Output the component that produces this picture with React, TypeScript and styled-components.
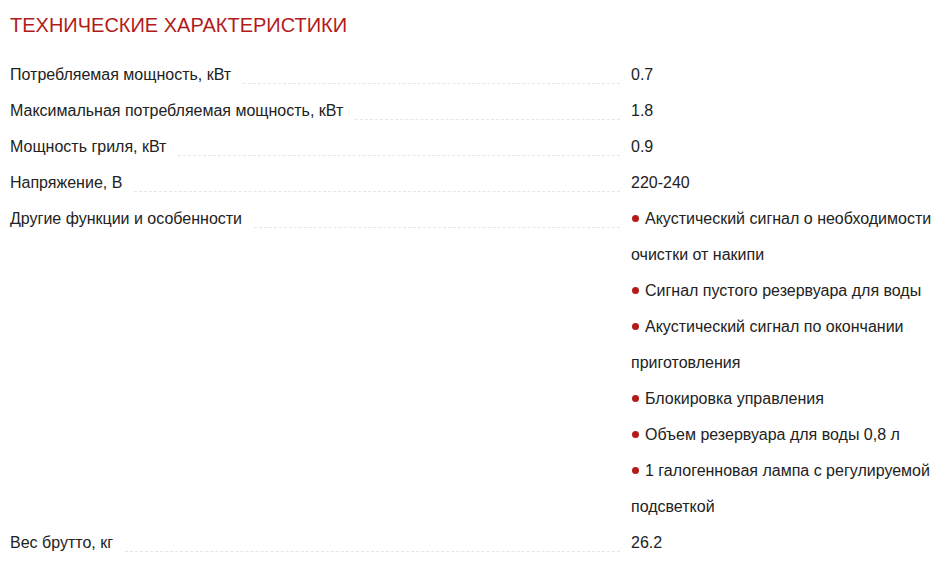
import React from "react";
import styled, { createGlobalStyle } from "styled-components";

const Global = createGlobalStyle`
  html, body { margin: 0; padding: 0; background: #fff; }
  body { font-family: "Liberation Sans", Arial, sans-serif; color: #222; }
`;

const Page = styled.div`
  padding: 10px 10px 0 10px;
  width: 945px;
  box-sizing: border-box;
`;

const Title = styled.h2`
  margin: 0 0 17px 0;
  font-size: 20px;
  line-height: 30px;
  font-weight: 400;
  color: #b31b1b;
  text-transform: uppercase;
`;

const Table = styled.div`
  display: grid;
  grid-template-columns: 610px 1fr;
  column-gap: 11px;
  font-size: 16px;
  line-height: 36px;
`;

const LabelCell = styled.div`
  display: flex;
  align-items: flex-start;
`;

const LabelText = styled.span`
  white-space: nowrap;
`;

const Leader = styled.span`
  flex: 1;
  margin-left: 12px;
  height: 26px;
  border-bottom: 1px dashed #e6e6e6;
`;

const ValueCell = styled.div``;

const Item = styled.div`
  line-height: 36px;
`;

const Bullet = styled.span`
  display: inline-block;
  width: 7px;
  height: 7px;
  border-radius: 50%;
  background: #b31b1b;
  margin: 0 6px 0 1px;
  vertical-align: 2px;
`;

type Row = { label: string; value?: string; items?: string[] };

const rows: Row[] = [
  { label: "Потребляемая мощность, кВт", value: "0.7" },
  { label: "Максимальная потребляемая мощность, кВт", value: "1.8" },
  { label: "Мощность гриля, кВт", value: "0.9" },
  { label: "Напряжение, В", value: "220-240" },
  {
    label: "Другие функции и особенности",
    items: [
      "Акустический сигнал о необходимости очистки от накипи",
      "Сигнал пустого резервуара для воды",
      "Акустический сигнал по окончании приготовления",
      "Блокировка управления",
      "Объем резервуара для воды 0,8 л",
      "1 галогенновая лампа с регулируемой подсветкой",
    ],
  },
  { label: "Вес брутто, кг", value: "26.2" },
];

export default function App() {
  return (
    <Page>
      <Global />
      <Title>Технические характеристики</Title>
      <Table>
        {rows.map((r) => (
          <React.Fragment key={r.label}>
            <LabelCell>
              <LabelText>{r.label}</LabelText>
              <Leader />
            </LabelCell>
            <ValueCell>
              {r.value}
              {r.items &&
                r.items.map((it) => (
                  <Item key={it}>
                    <Bullet />
                    {it}
                  </Item>
                ))}
            </ValueCell>
          </React.Fragment>
        ))}
      </Table>
    </Page>
  );
}
